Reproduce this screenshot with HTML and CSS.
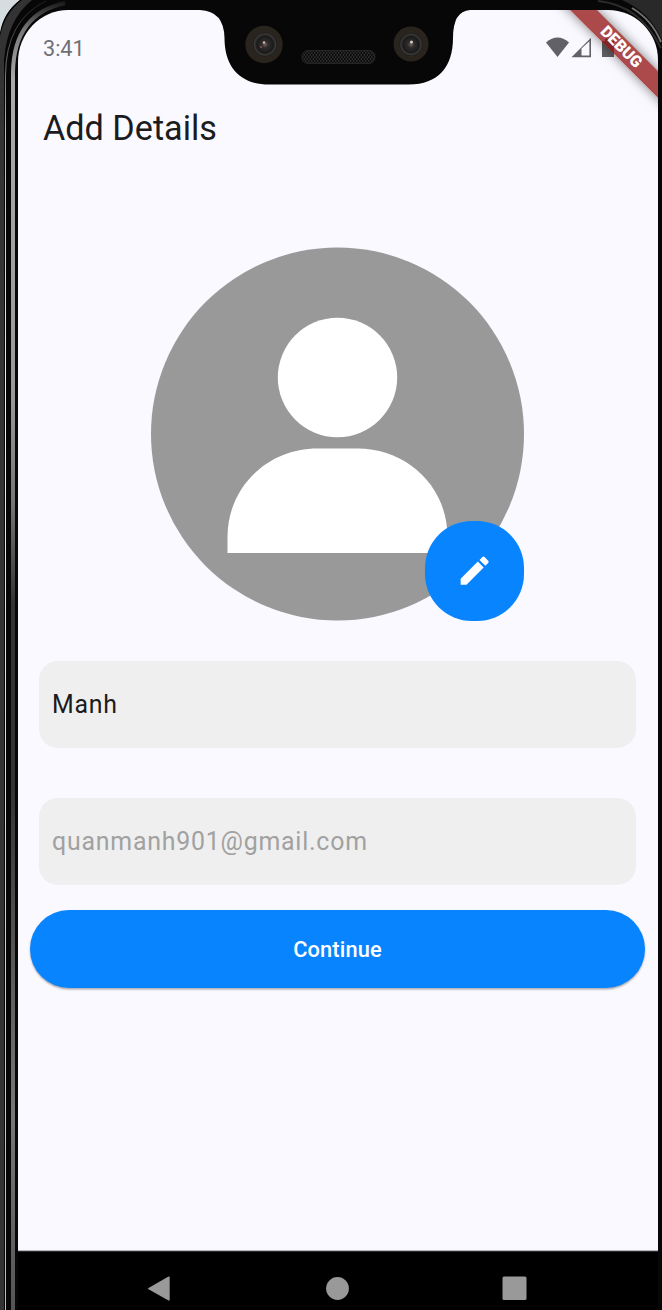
FILE: index.html
```html
<!DOCTYPE html>
<html lang="en">
<head>
<meta charset="utf-8">
<title>Add Details</title>
<link rel="stylesheet" href="styles.css">
</head>
<body>
<div class="phone">
  <svg class="bezel" width="662" height="1310" viewBox="0 0 662 1310" aria-hidden="true">
    <defs>
      <linearGradient id="side" x1="0" y1="0" x2="0" y2="1">
        <stop offset="0" stop-color="#1c1c1c"/><stop offset=".012" stop-color="#555"/><stop offset=".02" stop-color="#777"/><stop offset=".06" stop-color="#aaa"/><stop offset=".3" stop-color="#999"/><stop offset=".38" stop-color="#777"/><stop offset=".46" stop-color="#333"/><stop offset=".6" stop-color="#333"/><stop offset=".85" stop-color="#777"/><stop offset="1" stop-color="#555"/>
      </linearGradient>
      <linearGradient id="edge" x1="0" y1="0" x2="0" y2="1">
        <stop offset="0" stop-color="#222"/><stop offset=".1" stop-color="#bbb"/><stop offset=".3" stop-color="#eee"/><stop offset="1" stop-color="#bbb"/>
      </linearGradient>
    </defs>
    <path d="M0 0H20Q3 13 0 33Z" fill="#d5dde0"/>
    <path d="M0 1310V34Q4 12 20 0H662V1310Z" fill="#070707"/>
    <path d="M0 1310V36Q5 13 22 0H32Q7 20 4 60V1310Z" fill="#333"/>
    <path d="M5.500 1310V75Q6 20 46 1" fill="none" stroke="url(#edge)" stroke-width="1"/>
    <path d="M13 1310V72Q14 14 65 3" fill="none" stroke="url(#side)" stroke-width="4"/>
    <path d="M622 0Q650 12 662 40V0Z" fill="#292929"/>
    <path d="M598 1Q640 5 661 48" fill="none" stroke="#2c2c2c" stroke-width="2"/>
    <path d="M632 8Q652 20 661 42" fill="none" stroke="#707070" stroke-width="2"/>
  </svg>

  <main class="screen">
    <header class="status">
      <span class="time">3:41</span>
      <svg class="signals" width="70" height="22" viewBox="0 0 70 22" aria-hidden="true">
        <path d="M0 5.500Q11.500-4.500 23 5.500L11.500 20Z" fill="#626266"/>
        <path fill-rule="evenodd" d="M25.500 20.200 45 .8V20.200ZM35.500 11.500V18.600H43.400V4.200Z" fill="#626266"/>
        <path d="M56 4H59V1.500H65V4H68V20H56Z" fill="#626266"/>
      </svg>
    </header>
    <h1 class="title">Add Details</h1>
    <section class="profile">
      <svg class="avatar" width="373" height="374" viewBox="0.500 0 373 374" role="img" aria-label="Profile picture">
        <circle cx="187" cy="187" r="186.500" fill="#999"/>
        <circle cx="187" cy="130.500" r="59.700" fill="#fff"/>
        <path d="M77 306V290C77 240 117 201.500 167 201.500H207C257 201.500 297 240 297 290V306Z" fill="#fff"/>
      </svg>
      <button class="edit" aria-label="Edit picture">
        <svg width="37.300" height="37.300" viewBox="0 0 24 24" aria-hidden="true"><path fill="#fff" d="M3 17.250V21h3.750L17.810 9.940l-3.750-3.750L3 17.250zM20.710 7.040a1 1 0 0 0 0-1.410l-2.340-2.340a1 1 0 0 0-1.410 0l-1.830 1.830 3.750 3.750 1.830-1.830z"/></svg>
      </button>
    </section>
    <form class="details">
      <div class="field">Manh</div>
      <div class="field hint">quanmanh901@gmail.com</div>
    </form>
    <button class="continue">Continue</button>
    <nav class="nav">
      <svg width="640" height="58" viewBox="0 0 640 58" aria-hidden="true">
        <g fill="#999"><path d="M130.500 36 150.500 24.500Q151.700 24 151.700 25.500V47.500Q151.700 49 150.500 48.500L130.500 37.200Q129.500 36.600 130.500 36Z"/><circle cx="319.500" cy="36.500" r="11.400"/><rect x="484.500" y="24.500" width="24" height="23.500" rx="1.500"/></g>
      </svg>
    </nav>
    <div class="ribbon">DEBUG</div>
  </main>

  <svg class="notch" width="270" height="90" viewBox="0 0 270 90" aria-hidden="true">
    <defs>
      <radialGradient id="lens"><stop offset="0" stop-color="#72615d"/><stop offset=".28" stop-color="#302c2c"/><stop offset=".7" stop-color="#1b1b1b"/><stop offset=".88" stop-color="#3a3a3a"/><stop offset="1" stop-color="#1b1916"/></radialGradient>
      <pattern id="mesh" width="3" height="4" patternUnits="userSpaceOnUse"><rect width="3" height="4" fill="#0c0c0c"/><circle cx=".8" cy="1" r=".75" fill="#444"/><circle cx="2.300" cy="3" r=".75" fill="#444"/></pattern>
    </defs>
    <path d="M0 10Q24 11 24.500 38C24.500 67 40 84.500 69 84.500H209C238 84.500 253 67 253 38Q253 11 270 10V0H0Z" fill="#070707"/>
    <circle cx="64" cy="44.500" r="18.700" fill="#29241e"/>
    <circle cx="65" cy="44.500" r="12" fill="url(#lens)"/>
    <circle cx="64" cy="42.500" r="1.200" fill="#d9b9b2"/><circle cx="61" cy="47" r="1.100" fill="#8c5344"/>
    <circle cx="211" cy="44" r="17.500" fill="#29241e"/>
    <circle cx="211" cy="44.500" r="11.500" fill="url(#lens)"/>
    <circle cx="211.500" cy="42" r="1.500" fill="#d8d0d0"/>
    <rect x="102" y="50.500" width="73" height="13" rx="6" fill="url(#mesh)" stroke="#252525"/>
  </svg>
</div>
</body>
</html>
```
FILE: styles.css
```css
* { box-sizing: border-box; }
body { margin: 0; background: #070707; font-family: Roboto, sans-serif; overflow: hidden; }
button { border: 0; padding: 0; font: inherit; }
svg { display: block; }
.phone { position: relative; width: 662px; height: 1310px; padding: 10px 4px 0 18px; overflow: hidden; }
.bezel { position: absolute; inset: 0; }
.screen {
  position: relative;
  display: flex;
  flex-direction: column;
  height: 1300px;
  overflow: hidden;
  background: #faf9ff;
  border-radius: 50px 50px 0 0 / 52px 50px 0 0;
}
.status { display: flex; justify-content: space-between; align-items: center; height: 76px; padding: 0 42px 0 25px; color: #707074; }
.time { font-size: 21.600px; }
.title { margin: 20px 25px 0; font-size: 34.200px; line-height: 44px; font-weight: 400; color: #1b1b20; }
.profile { position: relative; width: 373px; height: 374px; margin: 97px 0 0 133px; }
.edit {
  position: absolute;
  right: 0;
  bottom: 0;
  display: grid;
  place-items: center;
  width: 99px;
  height: 100px;
  border-radius: 47px;
  background: #0884ff;
}
.details { display: flex; flex-direction: column; gap: 50px; margin: 40px 22px 0 21px; }
.field {
  height: 87px;
  padding-left: 13px;
  border-radius: 19px;
  background: #efefef;
  color: #1b1b20;
  font-size: 24.900px;
  letter-spacing: .78px;
  line-height: 87px;
}
.hint { color: #a1a1a1; }
.continue {
  height: 78px;
  margin: 25px 13px 0 12px;
  border-radius: 39px;
  background: #0884ff;
  color: #fff;
  font-size: 21.800px;
  font-weight: 500;
  letter-spacing: .15px;
  box-shadow: 0 1.500px 2px rgba(0, 0, 0, .32);
}
.nav { height: 60px; margin-top: auto; border-top: 1px solid #b5b5ba; background: #000; }
.nav::before { content: ""; display: block; height: 1px; background: #2c2c30; }
.ribbon {
  position: absolute;
  top: 27.500px;
  right: -57.500px;
  width: 190px;
  height: 18.500px;
  transform: rotate(45deg);
  background: rgba(146, 13, 15, .75);
  box-shadow: 0 0 12px rgba(0, 0, 0, .5);
  color: #fff;
  font-size: 16px;
  font-weight: 900;
  line-height: 18.500px;
  text-align: center;
}
.notch { position: absolute; left: 200px; top: 0; }
```
